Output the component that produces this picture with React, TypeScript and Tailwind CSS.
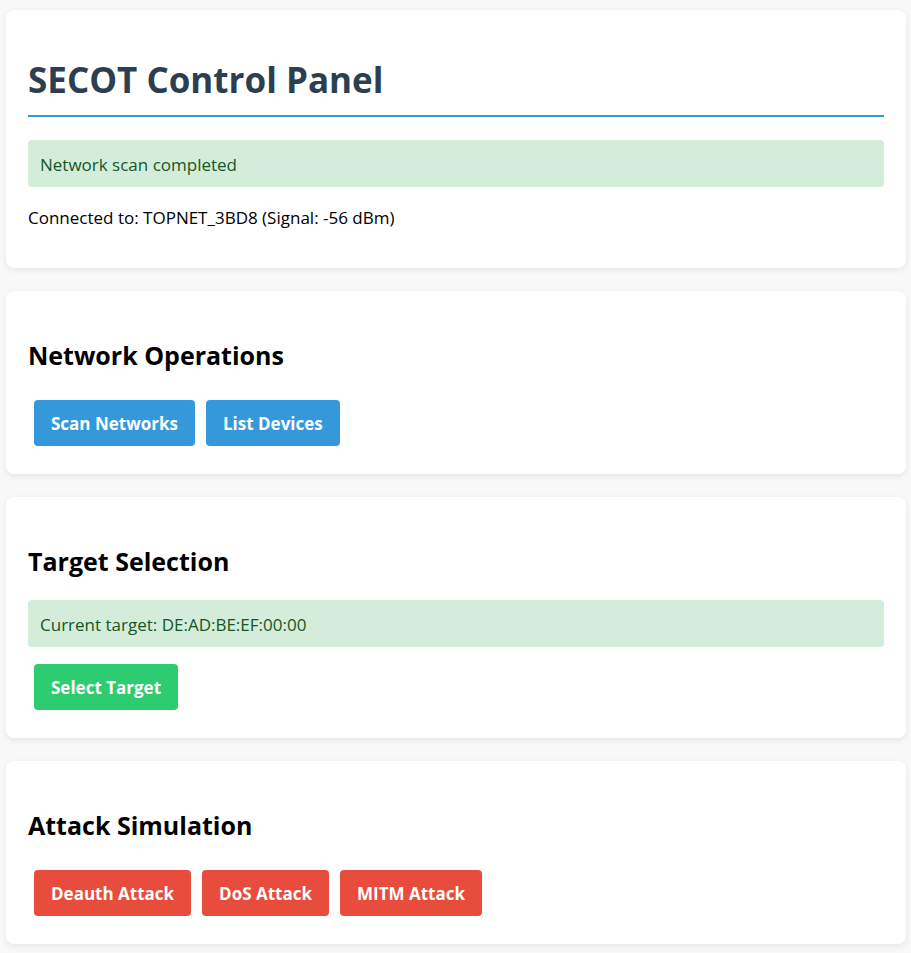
import React from "react";

const font = { fontFamily: '"Open Sans", "Noto Sans", sans-serif' };

function Btn({ children, color }: { children: React.ReactNode; color: string }) {
  return (
    <button className={`h-[46px] px-[17px] rounded-[4px] text-white font-bold text-[17px] leading-[23px] ${color}`}>
      {children}
    </button>
  );
}

function Card({ children, className = "" }: { children: React.ReactNode; className?: string }) {
  return (
    <div className={`bg-white rounded-[8px] shadow-[0_2px_6px_rgba(0,0,0,0.08)] px-[22px] pt-[22px] ${className}`}>
      {children}
    </div>
  );
}

function H2({ children }: { children: React.ReactNode }) {
  return <h2 className="mt-[25px] text-[25px] leading-[34px] font-bold text-black">{children}</h2>;
}

export default function App() {
  return (
    <div style={font} className="min-h-[953px] bg-[#f8f8f8] pl-[6px] pr-[5px] pt-[10px] pb-[7px] flex flex-col gap-[23px]">
      <Card className="pb-[39px]">
        <h1 className="mt-[25px] text-[35px] leading-[46px] font-bold text-[#2c3e50] pb-[12px] border-b-2 border-[#3498db]">
          SECOT Control Panel
        </h1>
        <div className="mt-[23px] bg-[#d4edda] text-[#155724] rounded-[4px] px-[12px] pt-[13px] pb-[11px] text-[17px] leading-[23px]">
          Network scan completed
        </div>
        <p className="mt-[19px] text-[17px] leading-[23px] text-black">Connected to: TOPNET_3BD8 (Signal: -56 dBm)</p>
      </Card>

      <Card className="pb-[28px]">
        <H2>Network Operations</H2>
        <div className="mt-[28px] ml-[6px] flex gap-[11px]">
          <Btn color="bg-[#3498db]">Scan Networks</Btn>
          <Btn color="bg-[#3498db]">List Devices</Btn>
        </div>
      </Card>

      <Card className="pb-[28px]">
        <H2>Target Selection</H2>
        <div className="mt-[22px] bg-[#d4edda] text-[#155724] rounded-[4px] px-[12px] pt-[13px] pb-[11px] text-[17px] leading-[23px]">
          Current target: DE:AD:BE:EF:00:00
        </div>
        <div className="mt-[17px] ml-[6px] flex gap-[11px]">
          <Btn color="bg-[#2ecc71]">Select Target</Btn>
        </div>
      </Card>

      <Card className="pb-[28px]">
        <H2>Attack Simulation</H2>
        <div className="mt-[28px] ml-[6px] flex gap-[11px]">
          <Btn color="bg-[#e74c3c]">Deauth Attack</Btn>
          <Btn color="bg-[#e74c3c]">DoS Attack</Btn>
          <Btn color="bg-[#e74c3c]">MITM Attack</Btn>
        </div>
      </Card>
    </div>
  );
}
